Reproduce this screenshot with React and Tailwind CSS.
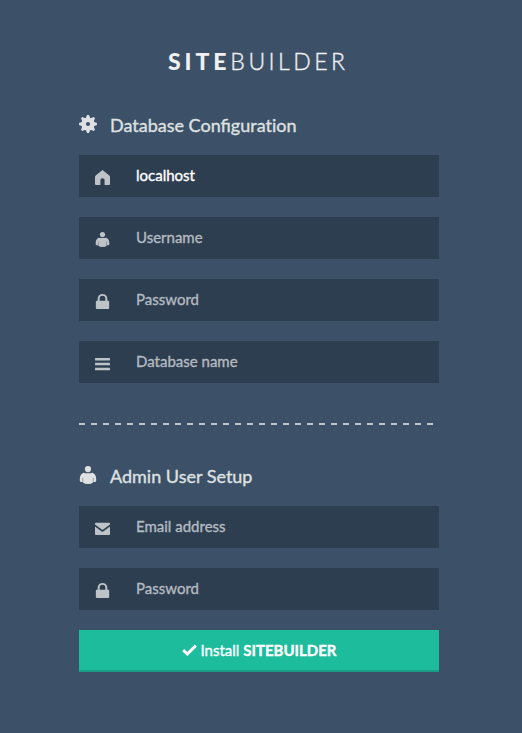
import React from "react";

function Svg({ className, children }) {
  return (
    <svg viewBox="0 0 18 18" className={`block shrink-0 fill-current ${className}`}>
      {children}
    </svg>
  );
}

function GearIcon({ className }) {
  const teeth = [0, 45, 90, 135];
  return (
    <svg viewBox="0 0 18 18" className={`block shrink-0 ${className}`}>
      {teeth.map((a) => (
        <path key={a} d="M6.9 3 7.8.5Q8 0 8.5 0h1Q10 0 10.2.5L11.1 3V15L10.2 17.5Q10 18 9.5 18h-1Q8 18 7.8 17.5L6.9 15z" className="fill-current" transform={`rotate(${a} 9 9)`} />
      ))}
      <circle cx="9" cy="9" r="6.6" className="fill-current" />
      <circle cx="9" cy="9" r="2.1" className="fill-[#3c5168]" />
    </svg>
  );
}

function HomeIcon({ className }) {
  return (
    <Svg className={className}>
      <path d="M9 0 17.2 6.6Q18 7.3 18 8.4V16.8Q18 18 16.8 18H11.5V12Q11.5 10 9 10T6.5 12V18H1.2Q0 18 0 16.8V8.4Q0 7.3.8 6.6Z" />
    </Svg>
  );
}

function UserIcon({ className }) {
  return (
    <Svg className={className}>
      <circle cx="9" cy="3.1" r="3.1" />
      <path d="M4.6 6.8Q6.8 7.3 9 7.3t4.4-.5Q17.2 8.3 17.2 13.2V14.8Q17.2 16 15.8 16H14.3V11.8H13.9V16.8Q12.4 18 9 18T4.1 16.8V11.8H3.7V16H2.2Q.8 16 .8 14.8V13.2Q.8 8.3 4.6 6.8Z" />
    </Svg>
  );
}

function LockIcon({ className }) {
  return (
    <Svg className={className}>
      <path d="M3.2 8V5.4a5.8 5.4 0 0 1 11.6 0V8h1q1.2 0 1.2 1.2v7.6Q17 18 15.8 18H2.2Q1 18 1 16.8V9.2Q1 8 2.2 8ZM5.6 8h6.8V5.5a3.4 3.3 0 0 0-6.8 0Z" />
    </Svg>
  );
}

function ListIcon({ className }) {
  return (
    <Svg className={className}>
      <rect x="0" y="2.4" width="18" height="3" rx=".6" />
      <rect x="0" y="8.2" width="18" height="3" rx=".6" />
      <rect x="0" y="14" width="18" height="3" rx=".6" />
    </Svg>
  );
}

function MailIcon({ className }) {
  return (
    <Svg className={className}>
      <path d="M1.2 2.2H16.8Q18 2.2 18 3.4V4.2L9.8 10.2Q9 10.7 8.2 10.2L0 4.2V3.4Q0 2.2 1.2 2.2ZM0 6.7 7.6 12.3Q9 13.2 10.4 12.3L18 6.7V15.7Q18 16.9 16.8 16.9H1.2Q0 16.9 0 15.7Z" />
    </Svg>
  );
}

function CheckIcon({ className }) {
  return (
    <svg viewBox="0 0 15 12" className={`block shrink-0 ${className}`}>
      <path d="M1.2 6.1 5.3 10 13.8 1.6" fill="none" stroke="currentColor" strokeWidth="3" />
    </svg>
  );
}

function Field({ icon: Icon, text, filled }) {
  return (
    <div className="flex h-[42px] items-center bg-[#2d3e50] pl-4">
      <Icon className="mt-[3px] size-[15px] text-[#bdc3c7]" />
      <span className={`ml-[26px] pb-0.5 text-[15px] leading-[22px] ${filled ? "text-white" : "text-[#b3bac0]"}`}>{text}</span>
    </div>
  );
}

function Heading({ icon: Icon, children }) {
  return (
    <h2 className="flex h-6 items-start text-[18px] leading-[22px] text-[#dfe0e1]">
      <Icon className="mt-px size-[18px]" />
      <span className="ml-[13px]">{children}</span>
    </h2>
  );
}

export default function App() {
  return (
    <main className="h-[733px] w-[522px] bg-[#3c5168] pl-[79px] pt-[46px] font-['Lato',sans-serif] [-webkit-text-stroke:0.35px_currentColor]">
      <div className="w-[360px]">
        <h1 className="h-[30px] pl-[89px] text-[23px] leading-[30px] whitespace-nowrap text-[#eff0f1] [-webkit-text-stroke:0px]">
          <span className="font-black tracking-[3.9px]">SITE</span>
          <span className="font-light tracking-[3.5px] [-webkit-text-stroke:0.35px_currentColor]">BUILDER</span>
        </h1>
        <section className="mt-[38px]">
          <Heading icon={GearIcon}>
            Database Configurat<span className="[font-variant-ligatures:none]">ion</span>
          </Heading>
          <div className="mt-[17px] flex flex-col gap-5">
            <Field icon={HomeIcon} text="localhost" filled />
            <Field icon={UserIcon} text="Username" />
            <Field icon={LockIcon} text="Password" />
            <Field icon={ListIcon} text="Database name" />
          </div>
        </section>
        <div className="mt-10 h-0.5 bg-[repeating-linear-gradient(90deg,#bdc3c7_0px,#bdc3c7_6px,transparent_6px,transparent_12px)]" />
        <section className="mt-10">
          <Heading icon={UserIcon}>Admin User Setup</Heading>
          <div className="mt-[17px] flex flex-col gap-5">
            <Field icon={MailIcon} text="Email address" />
            <Field icon={LockIcon} text="Password" />
            <button className="flex h-[42px] items-center justify-center border-b-2 border-[#1a9f86] bg-[#1dbc9c] text-[15px] leading-[22px] text-white">
              <CheckIcon className="h-3 w-[15px]" />
              <span className="ml-1">
                Install <b className="font-bold">SITEBUILDER</b>
              </span>
            </button>
          </div>
        </section>
      </div>
    </main>
  );
}
